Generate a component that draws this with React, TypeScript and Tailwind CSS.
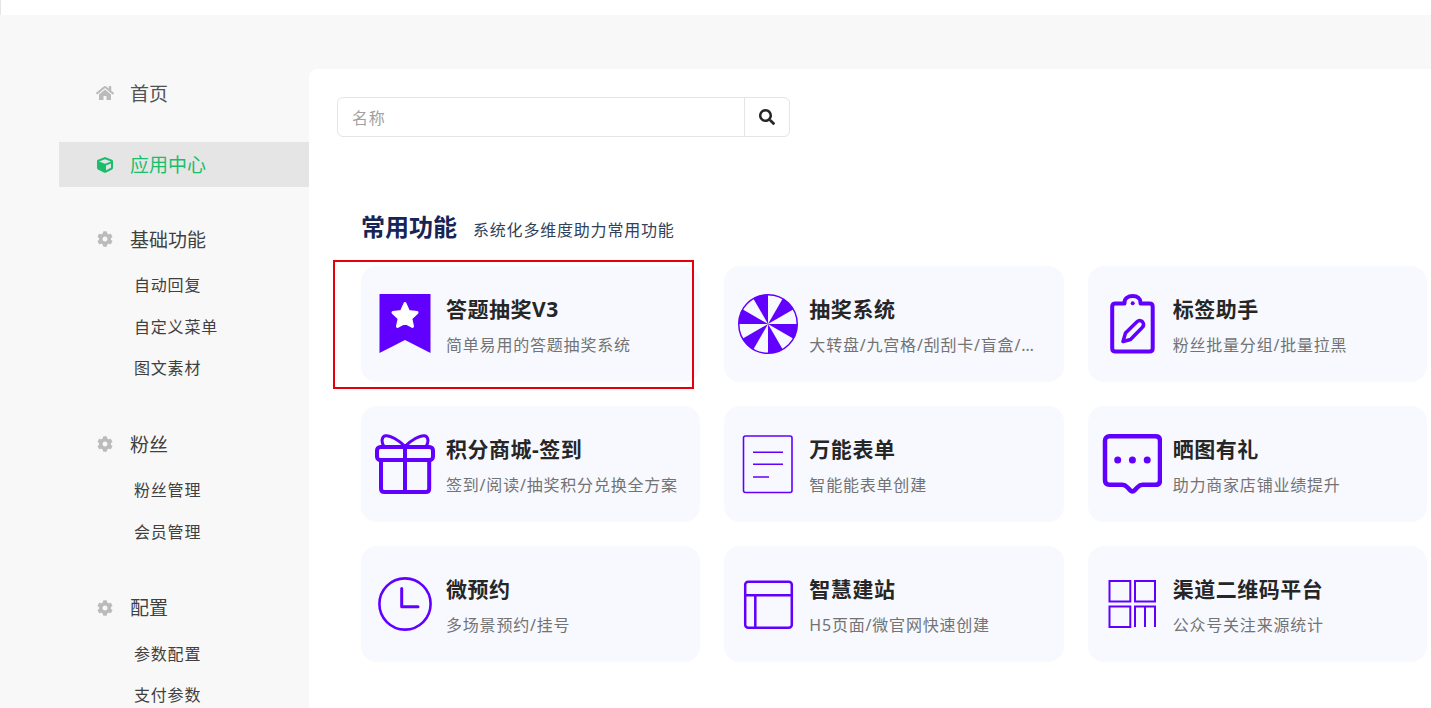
import React from "react";
import { FaHome, FaCube, FaCog, FaSearch } from "react-icons/fa";

const P = "#6200ff";

function wedge(i: number) {
  const a0 = ((i * 30 - 90) * Math.PI) / 180;
  const a1 = (((i + 1) * 30 - 90) * Math.PI) / 180;
  const r = 29.5;
  const p = (a: number) => `${(30 + r * Math.cos(a)).toFixed(2)} ${(30 + r * Math.sin(a)).toFixed(2)}`;
  return `M30 30 L${p(a0)} A${r} ${r} 0 0 1 ${p(a1)} Z`;
}

const Svg = ({ children }: { children: React.ReactNode }) => (
  <svg viewBox="0 0 60 60" className="w-15 h-15 shrink-0" fill="none" stroke={P} strokeLinejoin="round" strokeLinecap="round">
    {children}
  </svg>
);

const icons: React.ReactNode[] = [
  <Svg key="a">
    <path d="M4.5 0H55.5V59L30 46L4.5 59Z" fill={P} stroke="none" />
    <path
      d="M30 9.5L33.6 17.6L42 18.6L35.8 24.4L37.5 32.4L30 28.4L22.5 32.4L24.2 24.4L18 18.6L26.4 17.6Z"
      fill="#fff"
      stroke="#fff"
      strokeWidth="3"
    />
  </Svg>,
  <Svg key="b">
    <circle cx="30" cy="30" r="29.25" strokeWidth="1.5" />
    {[1, 3, 5, 7, 9, 11].map((i) => (
      <path key={i} d={wedge(i)} fill={P} stroke="none" />
    ))}
  </Svg>,
  <Svg key="c">
    <path d="M22.5 9.5V8.5C22.5 4.5 26 2 30.7 2C35.4 2 38.5 4.5 38.5 8.5V9.5H47.5C49.5 9.5 50.7 10.7 50.7 12.7V54.3C50.7 56.3 49.5 57.5 47.5 57.5H13.5C11.5 57.5 10.2 56.3 10.2 54.3V12.7C10.2 10.7 11.5 9.5 13.5 9.5Z" strokeWidth="4" />
    <circle cx="30.7" cy="9.3" r="2" fill={P} stroke="none" />
    <path d="M21 47.5L23.5 39L35 27.8C37 26 40 26.3 41 28.5C42 30.3 41.3 32.5 40 33.7L28.5 45.5Z" strokeWidth="3.5" />
  </Svg>,
  <Svg key="d">
    <rect x="2" y="13" width="56" height="13" rx="3.5" strokeWidth="4" />
    <path d="M6 26V54.5C6 56.8 7.2 58 9.5 58H50.7C53 58 54.2 56.8 54.2 54.5V26" strokeWidth="4" />
    <path d="M30 13V58" strokeWidth="4" />
    <path d="M30 12.5C24 6 15 1.2 10.5 1.8C6.5 2.5 6 8 9 12.5M30 12.5C36 6 45 1.2 49.5 1.8C53.5 2.5 54 8 51 12.5" strokeWidth="3" />
  </Svg>,
  <Svg key="e">
    <rect x="5.5" y="2" width="48.5" height="56.5" rx="2" strokeWidth="1.6" />
    <path d="M15 18.3H45M15 30.3H45M15 43H31" strokeWidth="1.5" strokeLinecap="butt" />
  </Svg>,
  <Svg key="f">
    <path d="M7.5 2.3H53.5C56.3 2.3 58 4 58 6.8V46.3C58 49.1 56.3 50.8 53.5 50.8H40.5C38.5 50.8 37 51.6 35.5 53.2L32.5 56.4C31.2 57.8 29.6 57.8 28.3 56.4L25.3 53.2C23.8 51.6 22.3 50.8 20.3 50.8H7.5C4.7 50.8 3 49.1 3 46.3V6.8C3 4 4.7 2.3 7.5 2.3Z" strokeWidth="4.5" />
    <circle cx="15.7" cy="26" r="3.5" fill={P} stroke="none" />
    <circle cx="30.4" cy="26" r="3.5" fill={P} stroke="none" />
    <circle cx="45.2" cy="26" r="3.5" fill={P} stroke="none" />
  </Svg>,
  <Svg key="g">
    <circle cx="30" cy="30" r="25.6" strokeWidth="2.6" />
    <path d="M26.7 14.5V32.7H43" strokeWidth="3" />
  </Svg>,
  <Svg key="h">
    <rect x="7.2" y="7.8" width="46.6" height="46" rx="3" strokeWidth="2.5" />
    <path d="M7.2 21.2H53.8M17.3 21.2V53.8" strokeWidth="2.5" strokeLinecap="butt" />
  </Svg>,
  <Svg key="i">
    <g strokeWidth="2" strokeLinecap="butt" strokeLinejoin="miter">
      <rect x="7.5" y="7" width="20.8" height="20.5" />
      <rect x="33" y="7" width="20" height="20.5" />
      <rect x="7.5" y="32.5" width="20.8" height="20.5" />
      <path d="M33 53V32.5H53V53M43 32.5V53" />
    </g>
  </Svg>,
];

const cards = [
  ["答题抽奖V3", "简单易用的答题抽奖系统"],
  ["抽奖系统", "大转盘/九宫格/刮刮卡/盲盒/砸金蛋"],
  ["标签助手", "粉丝批量分组/批量拉黑"],
  ["积分商城-签到", "签到/阅读/抽奖积分兑换全方案"],
  ["万能表单", "智能能表单创建"],
  ["晒图有礼", "助力商家店铺业绩提升"],
  ["微预约", "多场景预约/挂号"],
  ["智慧建站", "H5页面/微官网快速创建"],
  ["渠道二维码平台", "公众号关注来源统计"],
];

const groups = [
  { title: "基础功能", items: ["自动回复", "自定义菜单", "图文素材"] },
  { title: "粉丝", items: ["粉丝管理", "会员管理"] },
  { title: "配置", items: ["参数配置", "支付参数"] },
];

export default function App() {
  return (
    <div
      className="h-screen overflow-hidden bg-[#f8f8f8] tracking-wider text-neutral-800"
      style={{ fontFamily: '"Noto Sans", "Noto Sans CJK SC", sans-serif' }}
    >
      <div className="h-[15px] bg-white border-l border-neutral-200" />
      <div className="flex pt-[54px]">
        <nav className="w-[250px] ml-[59px] shrink-0 pt-px text-[19px] tracking-normal">
          <a className="flex items-center h-12 pb-0.5 pl-9 gap-[15px] text-neutral-600">
            <span className="w-5 flex justify-center text-lg text-[#bbb]"><FaHome /></span>
            <span className="pt-0.5">首页</span>
          </a>
          <a className="flex items-center h-[45px] mt-6 pl-9 gap-[15px] bg-neutral-200 text-[#19be6b]">
            <span className="w-5 flex justify-center text-base"><FaCube /></span>
            <span className="pt-0.5">应用中心</span>
          </a>
          {groups.map((g, i) => (
            <div key={g.title} className={i === 0 ? "mt-7" : "mt-8"}>
              <div className="flex items-center h-12 pl-9 gap-[15px] text-neutral-700">
                <span className="w-5 flex justify-center text-base text-[#bbb]"><FaCog /></span>
                <span className="pt-0.5">{g.title}</span>
              </div>
              <ul className="mt-0.5 flex flex-col gap-[1.5px] text-base tracking-wider text-neutral-700">
                {g.items.map((s) => (
                  <li key={s} className="h-10 flex items-center pl-[75px]">{s}</li>
                ))}
              </ul>
            </div>
          ))}
        </nav>
        <main className="flex-1 min-w-0 h-screen bg-white rounded-tl-lg pl-7 pt-7 pr-1">
          <div className="flex h-10 w-[453px] border border-neutral-200 rounded-md">
            <div className="flex-1 flex items-center pl-3.5 pt-0.5 text-base text-neutral-400">名称</div>
            <div className="px-3.5 flex items-center justify-center border-l border-neutral-200 text-neutral-800 text-base"><FaSearch /></div>
          </div>
          <div className="flex items-baseline gap-4 mt-18 pl-6">
            <h2 className="text-2xl leading-9 font-bold text-blue-950 tracking-normal">常用功能</h2>
            <span className="text-base text-slate-700">系统化多维度助力常用功能</span>
          </div>
          <div className="relative grid grid-cols-3 gap-6 mt-[21px] ml-6">
            {cards.map(([t, s], i) => (
              <div key={t} className="h-29 rounded-2xl bg-indigo-50/50 flex items-center pl-3.5 pr-5 gap-3">
                {icons[i]}
                <div className="min-w-0 flex-1 pt-1 -ml-px">
                  <div className="text-[21px] font-bold leading-7 tracking-wide text-neutral-800">{t}</div>
                  <div className="mt-2.5 text-base leading-6 text-neutral-500 truncate">{s}</div>
                </div>
              </div>
            ))}
            <div className="absolute -left-7 -top-1.5 w-[361px] h-[129px] border-2 border-red-600" />
          </div>
        </main>
      </div>
    </div>
  );
}
